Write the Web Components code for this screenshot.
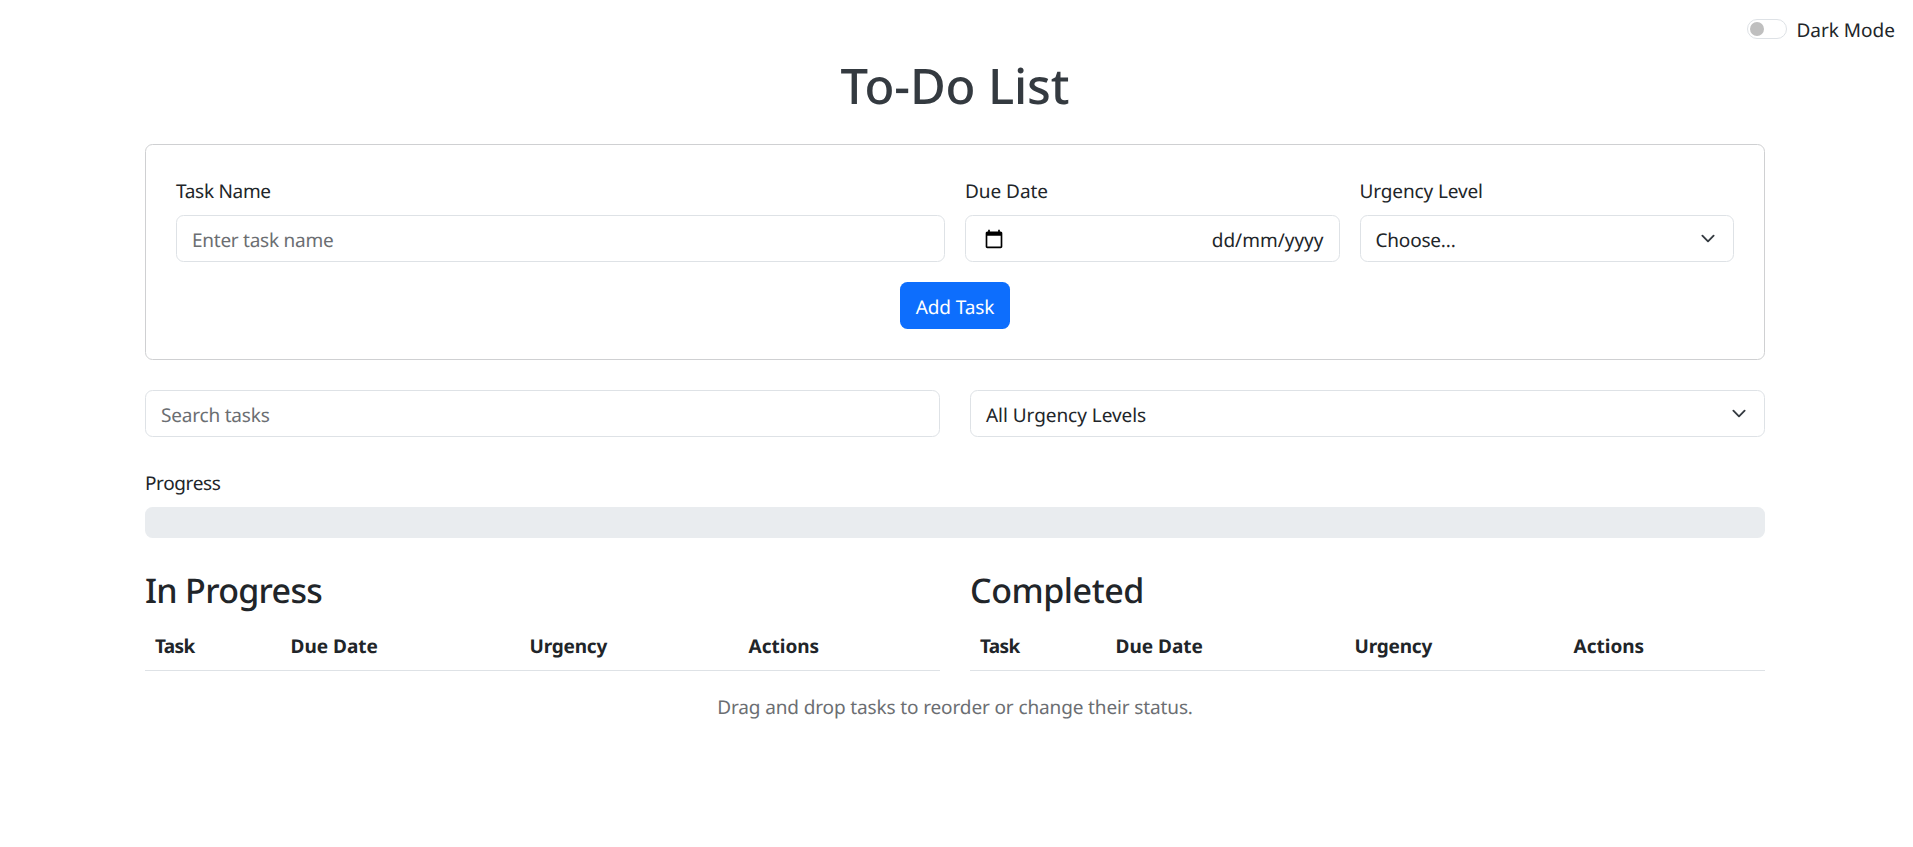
<!DOCTYPE html>
<html lang="en">
<head>
<meta charset="utf-8">
<title>To-Do List</title>
<style>
  html, body { margin: 0; }
  body {
    font: 400 19px/30px "Noto Sans", "Open Sans", sans-serif;
    text-rendering: geometricPrecision;
    color: #212529;
    background: #fff;
  }
</style>
</head>
<body>
<todo-app></todo-app>
<script>
const define = (name, html) => {
  const template = document.createElement('template');
  template.innerHTML = html;
  customElements.define(name, class extends HTMLElement {
    constructor() {
      super();
      this.attachShadow({ mode: 'open' }).append(template.content.cloneNode(true));
    }
  });
};

// A line of text, tracked by --ls.
define('t-line', `
  <style>
    :host { display: block; height: 30px; line-height: 32px; white-space: nowrap; letter-spacing: var(--ls, 0); }
  </style><slot></slot>`);

define('mode-switch', `
  <style>
    :host { display: flex; align-items: flex-start; gap: 9px; }
    .track { box-sizing: border-box; width: 40px; height: 20px; margin-top: 5px; padding: 2px; border: 1px solid #dee2e6; border-radius: 10px; }
    .knob { width: 14px; height: 14px; border-radius: 50%; background: #bfbfbf; }
  </style>
  <div class="track"><div class="knob"></div></div>
  <t-line><slot></slot></t-line>`);

define('form-box', `
  <style>
    :host { box-sizing: border-box; display: flex; align-items: center; justify-content: space-between; height: 47px; padding: 0 15px; border: 1px solid #dee2e6; border-radius: 7.5px; background: #fff; }
  </style><slot></slot>`);

define('chevron-icon', `
  <style>:host, svg { display: block; width: 20px; height: 15px; }</style>
  <svg viewBox="0 0 16 16"><path fill="none" stroke="#343a40" stroke-linecap="round" stroke-linejoin="round" stroke-width="2" d="m2 5 6 6 6-6"/></svg>`);

define('calendar-icon', `
  <style>:host { display: block; margin-left: 3px; } svg { display: block; width: 20px; height: 20px; }</style>
  <svg viewBox="0 0 24 24"><path d="M20 3h-1V1h-2v2H7V1H5v2H4c-1.1 0-2 .9-2 2v16c0 1.1.9 2 2 2h16c1.1 0 2-.9 2-2V5c0-1.1-.9-2-2-2zm0 18H4V8h16v13z"/></svg>`);

define('form-field', `
  <style>:host { display: flex; flex-direction: column; gap: 10px; }</style>
  <slot name="label"></slot><slot></slot>`);

define('primary-button', `
  <style>
    :host { box-sizing: border-box; display: flex; align-items: center; justify-content: center; width: 110px; height: 47px; border-radius: 7.5px; background: #0d6efd; color: #fff; }
  </style><slot></slot>`);

define('task-form', `
  <style>
    :host { box-sizing: border-box; display: flex; flex-direction: column; align-items: center; gap: 20px; height: 216px; padding: 30px; border: 1px solid #cfd0d2; border-radius: 7.5px; }
    .row { align-self: stretch; display: grid; grid-template-columns: 769fr 374.5fr 374.5fr; gap: 20px; }
    .muted { color: #6b6e72; }
  </style>
  <div class="row">
    <form-field>
      <t-line slot="label" style="--ls:-.3px">Task Name</t-line>
      <form-box><t-line class="muted" style="--ls:-.26px">Enter task name</t-line></form-box>
    </form-field>
    <form-field>
      <t-line slot="label" style="--ls:-.05px">Due Date</t-line>
      <form-box><calendar-icon></calendar-icon><t-line>dd/mm/yyyy</t-line></form-box>
    </form-field>
    <form-field>
      <t-line slot="label" style="--ls:-.13px">Urgency Level</t-line>
      <form-box><t-line style="--ls:-.2px">Choose...</t-line><chevron-icon></chevron-icon></form-box>
    </form-field>
  </div>
  <primary-button><t-line style="--ls:-.1px">Add Task</t-line></primary-button>`);

define('filter-bar', `
  <style>
    :host { display: grid; grid-template-columns: 1fr 1fr; gap: 30px; }
    .muted { color: #6b6e72; }
  </style>
  <form-box><t-line class="muted" style="--ls:-.2px">Search tasks</t-line></form-box>
  <form-box><t-line style="--ls:-.05px">All Urgency Levels</t-line><chevron-icon></chevron-icon></form-box>`);

define('progress-meter', `
  <style>
    :host { display: flex; flex-direction: column; gap: 10px; }
    .bar { height: 31px; border-radius: 7.5px; background: #e9ecef; }
  </style>
  <t-line style="--ls:-.38px"><slot></slot></t-line><div class="bar"></div>`);

define('task-table', `
  <style>
    :host { display: block; }
    h2 { height: 42px; margin: 0 0 10px; font-size: 34px; line-height: 44px; font-weight: 500; letter-spacing: var(--hls, 0); }
    .head { display: grid; grid-template-columns: 135.5px 239px 219px 1fr; padding: 10px 0; border-bottom: 1px solid #dee2e6; font-weight: 700; }
    t-line { padding-left: 10px; }
  </style>
  <h2><slot></slot></h2>
  <div class="head">
    <t-line style="--ls:-.6px">Task</t-line>
    <t-line>Due Date</t-line>
    <t-line style="--ls:-.2px">Urgency</t-line>
    <t-line>Actions</t-line>
  </div>`);

define('todo-app', `
  <style>
    :host { display: block; }
    header { display: flex; justify-content: flex-end; height: 40px; padding: 14px 18px 0 0; }
    main { width: 1620px; margin-left: 145px; }
    h1 { height: 60px; margin: 0 0 30px; font-size: 49px; line-height: 64px; font-weight: 500; letter-spacing: -.15px; text-align: center; color: #343a40; }
    filter-bar { margin-top: 30px; }
    progress-meter { margin: 30px 0; }
    .tables { display: grid; grid-template-columns: 1fr 1fr; gap: 30px; }
    footer { margin-top: 20px; text-align: center; color: #6b6e72; }
  </style>
  <header><mode-switch>Dark Mode</mode-switch></header>
  <main>
    <h1>To-Do List</h1>
    <task-form></task-form>
    <filter-bar></filter-bar>
    <progress-meter>Progress</progress-meter>
    <div class="tables">
      <task-table style="--hls:-.7px">In Progress</task-table>
      <task-table style="--hls:-.45px">Completed</task-table>
    </div>
    <footer><t-line style="--ls:-.13px">Drag and drop tasks to reorder or change their status.</t-line></footer>
  </main>`);
</script>
</body>
</html>
